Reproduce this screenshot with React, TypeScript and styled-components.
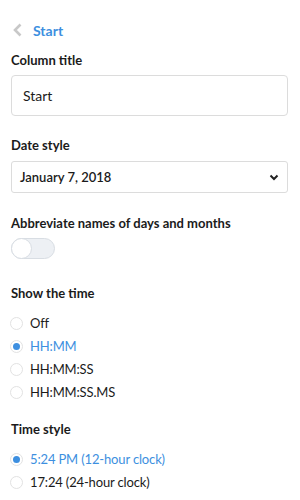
import React from 'react';
import styled, { createGlobalStyle } from 'styled-components';

const GlobalStyle = createGlobalStyle`
    body {
        margin: 0;
        background: #ffffff;
        font-family: Lato, 'Open Sans', sans-serif;
        color: #222222;
    }
`;

const Page = styled.div`
    padding: 18px 12px 0 11px;
    display: flex;
    flex-direction: column;
`;

const BackLink = styled.div`
    display: flex;
    align-items: center;
    gap: 10px;
    height: 24px;
    padding-left: 1px;
    color: #3d8fe0;
    font-size: 14px;
    font-weight: 700;
`;

const Section = styled.div<{ $gap?: number }>`
    margin-top: ${(p) => p.$gap ?? 0}px;
    display: flex;
    flex-direction: column;
`;

const Label = styled.div`
    font-size: 13px;
    font-weight: 700;
    color: #1b1b1b;
    line-height: 18px;
`;

const TextInput = styled.div`
    margin-top: 6px;
    height: 39px;
    border: 1px solid #dcdcdc;
    border-radius: 4px;
    display: flex;
    align-items: center;
    padding-left: 11px;
    font-size: 14px;
    color: #1b1b1b;
`;

const Select = styled.div`
    margin-top: 7px;
    height: 30px;
    border: 1px solid #dcdcdc;
    border-radius: 3px;
    display: flex;
    align-items: center;
    justify-content: space-between;
    padding: 0 8px 0 8px;
    font-size: 13px;
    font-weight: 600;
    color: #1b1b1b;
`;

const Toggle = styled.div<{ $on: boolean }>`
    margin-top: 6px;
    width: 42px;
    height: 19px;
    border: 1px solid #d8dde3;
    border-radius: 11px;
    background: ${(p) => (p.$on ? '#3d8fe0' : '#edf0f4')};
    position: relative;
`;

const Knob = styled.div`
    position: absolute;
    left: -1px;
    top: -1px;
    width: 19px;
    height: 19px;
    border-radius: 50%;
    background: #ffffff;
    border: 1px solid #d8dde3;
`;

const RadioList = styled.div`
    margin-top: 12px;
    display: flex;
    flex-direction: column;
    gap: 5px;
`;

const RadioRow = styled.div<{ $checked: boolean }>`
    display: flex;
    align-items: center;
    gap: 7px;
    height: 18px;
    font-size: 13px;
    letter-spacing: -0.15px;
    color: ${(p) => (p.$checked ? '#3d8fe0' : '#1b1b1b')};
`;

const RadioCircle = styled.span<{ $checked: boolean }>`
    width: 11px;
    height: 11px;
    border-radius: 50%;
    border: 1.5px solid #e2e2e2;
    display: flex;
    align-items: center;
    justify-content: center;
    margin-left: -1px;
    &::after {
        content: '';
        width: 7px;
        height: 7px;
        border-radius: 50%;
        background: ${(p) => (p.$checked ? '#3d8fe0' : 'transparent')};
    }
`;

const Radio: React.FC<{ label: string; checked?: boolean }> = ({ label, checked = false }) => (
    <RadioRow $checked={checked}>
        <RadioCircle $checked={checked} />
        {label}
    </RadioRow>
);

export default function App() {
    return (
        <>
            <GlobalStyle />
            <Page>
                <BackLink>
                    <svg width="11" height="14" viewBox="0 0 11 14">
                        <path d="M8.5 1.5 L3 7 L8.5 12.5" fill="none" stroke="#c8c8c8" strokeWidth="2.6" />
                    </svg>
                    Start
                </BackLink>

                <Section $gap={9}>
                    <Label>Column title</Label>
                    <TextInput>Start</TextInput>
                </Section>

                <Section $gap={20}>
                    <Label>Date style</Label>
                    <Select>
                        January 7, 2018
                        <svg width="10" height="7" viewBox="0 0 10 7">
                            <path d="M1.5 1.5 L5 5 L8.5 1.5" fill="none" stroke="#222" strokeWidth="2" />
                        </svg>
                    </Select>
                </Section>

                <Section $gap={21}>
                    <Label>Abbreviate names of days and months</Label>
                    <Toggle $on={false}>
                        <Knob />
                    </Toggle>
                </Section>

                <Section $gap={25}>
                    <Label>Show the time</Label>
                    <RadioList>
                        <Radio label="Off" />
                        <Radio label="HH:MM" checked />
                        <Radio label="HH:MM:SS" />
                        <Radio label="HH:MM:SS.MS" />
                    </RadioList>
                </Section>

                <Section $gap={19}>
                    <Label>Time style</Label>
                    <RadioList>
                        <Radio label="5:24 PM (12-hour clock)" checked />
                        <Radio label="17:24 (24-hour clock)" />
                    </RadioList>
                </Section>
            </Page>
        </>
    );
}
